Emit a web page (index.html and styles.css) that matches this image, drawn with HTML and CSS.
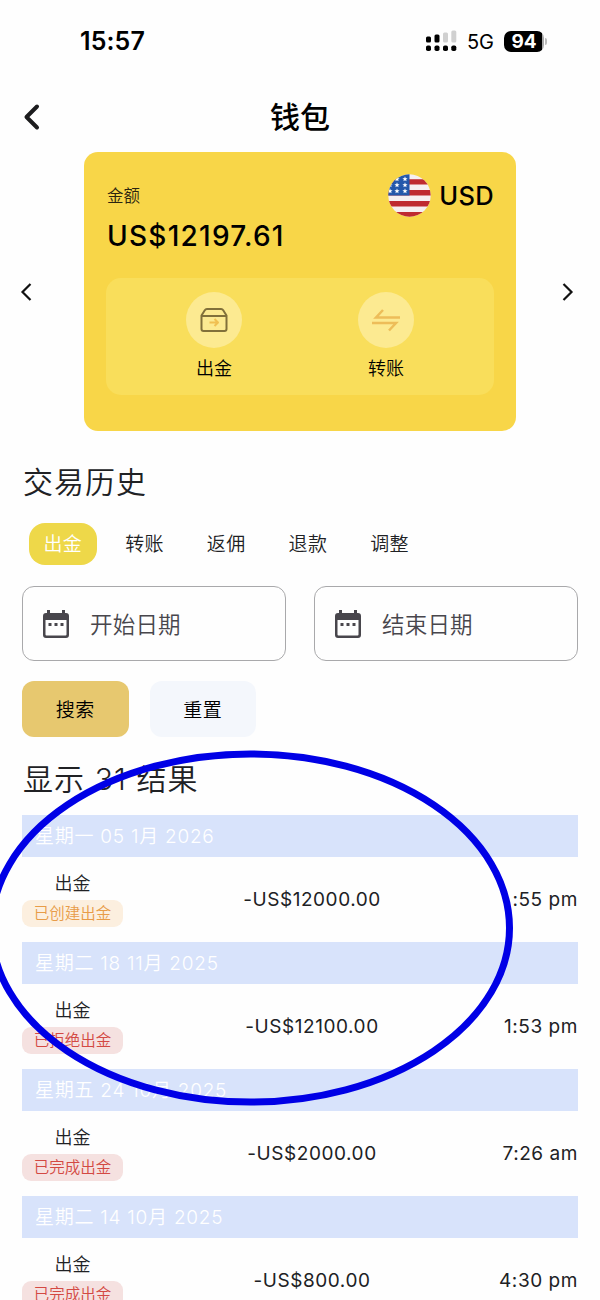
FILE: index.html
```html
<!DOCTYPE html>
<html lang="zh-CN">
<head>
<meta charset="utf-8">
<meta name="viewport" content="width=device-width, initial-scale=1">
<title>钱包</title>
<link rel="stylesheet" href="styles.css">
</head>
<body>
<div class="screen">
  <header class="status">
    <span class="clock">15:57</span>
    <div class="indicators">
      <svg class="signal" width="31" height="22" viewBox="0 0 31 22">
        <g fill="#000"><rect x="0" y="6.5" width="5" height="6" rx="1.5"/><rect x="8.5" y="4.5" width="5" height="8" rx="1.5"/><rect x="0" y="15.5" width="5" height="5.5" rx="1.8"/><rect x="8.5" y="15.5" width="5" height="5.5" rx="1.8"/><rect x="17" y="15.5" width="5" height="5.5" rx="1.8"/><rect x="25.3" y="15.5" width="5" height="5.5" rx="1.8"/></g>
        <g fill="#d0d0d0"><rect x="17" y="2.5" width="5" height="10" rx="1.5"/><rect x="25.3" y="0.5" width="5" height="12" rx="1.5"/></g>
      </svg>
      <span class="network">5G</span>
      <span class="battery"><span class="level">94</span><i class="tip"></i></span>
    </div>
  </header>
  <nav class="topbar">
    <svg class="back" width="20" height="28" viewBox="0 0 20 28" fill="none" stroke="#1c1c1e" stroke-width="4" stroke-linecap="round" stroke-linejoin="round"><path d="M15 3.5 4.5 14 15 24.5"/></svg>
    <h1>钱包</h1>
  </nav>
  <section class="carousel">
    <svg class="arrow" width="12" height="20" viewBox="0 0 12 20" fill="none" stroke="#111" stroke-width="2.2"><path d="M10.5 2 2.5 10l8 8"/></svg>
    <article class="card">
      <div class="card-head">
        <div>
          <div class="label">金额</div>
          <div class="balance">US$12197.61</div>
        </div>
        <div class="currency">
          <svg width="43" height="43" viewBox="0 0 43 43">
            <defs>
              <clipPath id="round"><circle cx="21.5" cy="21.5" r="21.2"/></clipPath>
              <path id="star" fill="#fff" d="M0-2.7.7-.8 2.6-.8 1.1.4 1.6 2.3 0 1.2-1.6 2.3-1.1.4-2.6-.8-.7-.8Z"/>
            </defs>
            <g clip-path="url(#round)">
              <path fill="#f6eff1" d="M0 0h43v43H0z"/>
              <path fill="#bf2a30" d="M0 5.2h43v5.3H0zM0 16h43v5.5H0zM0 27h43v5.500H0zM0 38h43v5H0z"/>
              <path fill="#2458ab" d="M0 0h21.5v21.5H0z"/>
              <use href="#star" x="9" y="5"/><use href="#star" x="17" y="5"/>
              <use href="#star" x="2" y="11"/><use href="#star" x="9" y="11"/><use href="#star" x="17" y="11"/>
              <use href="#star" x="2" y="17"/><use href="#star" x="9" y="17"/><use href="#star" x="17" y="17"/>
            </g>
          </svg>
          <span>USD</span>
        </div>
      </div>
      <div class="actions">
        <div class="action">
          <span class="disc"><svg width="28" height="26" viewBox="0 0 28 26" fill="none" stroke="#81703a" stroke-width="2" stroke-linejoin="round"><path d="M1.500 8.500V22a2 2 0 0 0 2 2h21a2 2 0 0 0 2-2V8.500L23.200 3.200A2.500 2.500 0 0 0 21 2H7a2.500 2.500 0 0 0-2.200 1.200L1.500 8.500ZM1.500 9h25"/><path stroke="#f0c052" d="M9.500 15.500H18M14.500 12l3.500 3.500-3.500 3.500"/></svg></span>
          <span>出金</span>
        </div>
        <div class="action">
          <span class="disc"><svg width="30" height="26" viewBox="0 0 30 26" fill="none" stroke="#edbd59" stroke-width="2.500"><path d="M29 10.500H5l7-7.500M1 16h24l-7 7.500"/></svg></span>
          <span>转账</span>
        </div>
      </div>
    </article>
    <svg class="arrow" width="12" height="20" viewBox="0 0 12 20" fill="none" stroke="#111" stroke-width="2.200"><path d="m1.500 2 8 8-8 8"/></svg>
  </section>
  <main>
    <h2 class="history">交易历史</h2>
    <div class="tabs"><span class="tab active">出金</span><span class="tab">转账</span><span class="tab">返佣</span><span class="tab">退款</span><span class="tab">调整</span></div>
    <div class="dates">
      <div class="date"><svg width="26" height="28" viewBox="0 0 26 28"><path fill="#48464c" fill-rule="evenodd" d="M4 0h3v3h12V0h3v3h1a3 3 0 0 1 3 3v19a3 3 0 0 1-3 3H3a3 3 0 0 1-3-3V6a3 3 0 0 1 3-3h1ZM2.500 10v14.500a1 1 0 0 0 1 1h19a1 1 0 0 0 1-1V10ZM5.500 13h3v3h-3Zm6 0h3v3h-3Zm6 0h3v3h-3Z"/></svg><span>开始日期</span></div>
      <div class="date"><svg width="26" height="28" viewBox="0 0 26 28"><path fill="#48464c" fill-rule="evenodd" d="M4 0h3v3h12V0h3v3h1a3 3 0 0 1 3 3v19a3 3 0 0 1-3 3H3a3 3 0 0 1-3-3V6a3 3 0 0 1 3-3h1ZM2.500 10v14.500a1 1 0 0 0 1 1h19a1 1 0 0 0 1-1V10ZM5.500 13h3v3h-3Zm6 0h3v3h-3Zm6 0h3v3h-3Z"/></svg><span>结束日期</span></div>
    </div>
    <div class="buttons"><button class="btn search">搜索</button><button class="btn reset">重置</button></div>
    <h2 class="results">显示 31 结果</h2>
    <div class="day">星期一 05 1月 2026</div>
    <div class="entry"><div class="kind"><span>出金</span><span class="badge created">已创建出金</span></div><span class="amount">-US$12000.00</span><span class="time">:55 pm</span></div>
    <div class="day">星期二 18 11月 2025</div>
    <div class="entry"><div class="kind"><span>出金</span><span class="badge">已拒绝出金</span></div><span class="amount">-US$12100.00</span><span class="time">1:53 pm</span></div>
    <div class="day">星期五 24 10月 2025</div>
    <div class="entry"><div class="kind"><span>出金</span><span class="badge">已完成出金</span></div><span class="amount">-US$2000.00</span><span class="time">7:26 am</span></div>
    <div class="day">星期二 14 10月 2025</div>
    <div class="entry"><div class="kind"><span>出金</span><span class="badge">已完成出金</span></div><span class="amount">-US$800.00</span><span class="time">4:30 pm</span></div>
  </main>
  <svg class="marker" width="600" height="1300" viewBox="0 0 600 1300"><ellipse cx="250.500" cy="928" rx="259" ry="174" fill="none" stroke="#0000e6" stroke-width="7"/></svg>
</div>
</body>
</html>
```
FILE: styles.css
```css
* { box-sizing: border-box; }
body { margin: 0; background: #fefefe; color: #202124; font-family: Inter, "Noto Sans CJK SC", sans-serif; font-weight: 350; }
.screen { position: relative; width: 600px; height: 1300px; overflow: hidden; }
.status { height: 82px; padding: 0 53px 0 80px; display: flex; align-items: center; justify-content: space-between; color: #000; }
.clock { font-size: 25px; font-weight: 600; letter-spacing: 0.1px; }
.indicators { display: flex; align-items: center; }
.network { margin: 2px 10px 0; font-size: 20px; font-weight: 400; }
.battery { display: flex; align-items: center; gap: 1px; }
.level { width: 40px; height: 21px; border-radius: 7px; background: linear-gradient(90deg, #000 38px, #aaa 38px); color: #fff; font-size: 19px; font-weight: 700; line-height: 21px; text-align: center; }
.tip { width: 2px; height: 7px; border-radius: 0 2px 2px 0; background: #bbb; }
.topbar { height: 70px; padding: 0 22px; display: grid; grid-template-columns: 20px 1fr 20px; align-items: center; }
h1 { margin: 0; text-align: center; font-size: 30px; line-height: 40px; font-weight: 500; color: #000; }
.carousel { height: 279px; padding: 0 26px 0 20px; display: flex; align-items: center; justify-content: space-between; }
.card { width: 432px; height: 279px; margin-left: 6px; padding: 21px 22px 0; border-radius: 14px; background: #f8d648; color: #000; }
.card-head { height: 105px; display: flex; justify-content: space-between; }
.label { margin-top: 11px; font-size: 16.500px; line-height: 24px; color: #2b2410; padding-left: 1px; }
.balance { margin-top: 10px; font-size: 28px; line-height: 36px; font-weight: 500; letter-spacing: 1.250px; padding-left: 1px; }
.currency { display: flex; align-items: center; gap: 8px; height: 44px; font-size: 25.500px; font-weight: 500; letter-spacing: 0.300px; }
.actions { height: 117px; padding: 14px 22px 0; border-radius: 15px; background: #f9de5b; display: grid; grid-template-columns: 1fr 1fr; }
.action { display: flex; flex-direction: column; align-items: center; gap: 8px; font-size: 18px; line-height: 26px; }
.disc { width: 56px; height: 56px; border-radius: 50%; background: #fcea91; display: flex; align-items: center; justify-content: center; }
main { padding: 0 22px; }
h2 { margin: 0; font-size: 30px; font-weight: 350; letter-spacing: 1px; }
.history { margin-top: 29px; height: 44px; padding-left: 1px; line-height: 44px; }
.tabs { margin-top: 19px; padding-left: 7px; display: flex; gap: 14px; }
.tab { width: 67.700px; height: 42px; border-radius: 16px; font-size: 19px; line-height: 44px; letter-spacing: 0.400px; text-align: center; }
.active { background: #eed849; color: #fff; }
.dates { margin-top: 21px; display: flex; gap: 28px; }
.date { width: 264px; height: 75px; padding-left: 20px; border: 1px solid #a9a9ab; border-radius: 12px; display: flex; align-items: center; gap: 21px; font-size: 22.500px; letter-spacing: 0.200px; color: #48464c; }
.date span { padding-bottom: 2px; }
.buttons { margin-top: 20px; display: flex; gap: 21px; }
.btn { width: 106.500px; height: 56px; padding: 0 0 2px; border: 0; border-radius: 12px; font: inherit; font-size: 19px; letter-spacing: 0.400px; color: #000; }
.search { background: #e7c86f; }
.reset { background: #f4f7fc; }
.results { margin-top: 20px; height: 44px; padding-left: 1px; line-height: 44px; font-size: 30px; letter-spacing: 1.100px; }
.day { height: 42px; margin-top: 14px; padding-left: 13px; background: #d8e3fb; color: #fff; font-size: 19px; line-height: 43px; letter-spacing: 0.750px; }
.entry + .day { margin-top: 0; }
.entry { height: 85px; display: grid; grid-template-columns: 101px 1fr 101px; align-items: center; font-size: 19px; font-weight: 400; letter-spacing: 0.550px; }
.kind { display: flex; flex-direction: column; align-items: center; gap: 3px; margin-top: -2px; font-size: 18px; font-weight: 350; line-height: 26px; letter-spacing: 0; }
.badge { width: 101px; height: 27px; border-radius: 9px; background: #f5e1e0; color: #d34943; font-size: 15.500px; line-height: 27px; text-align: center; }
.created { background: #fcefdf; color: #e89c48; }
.amount { padding-left: 24px; text-align: center; }
.time { text-align: right; white-space: nowrap; }
.marker { position: absolute; left: 0; top: 0; pointer-events: none; }
```
